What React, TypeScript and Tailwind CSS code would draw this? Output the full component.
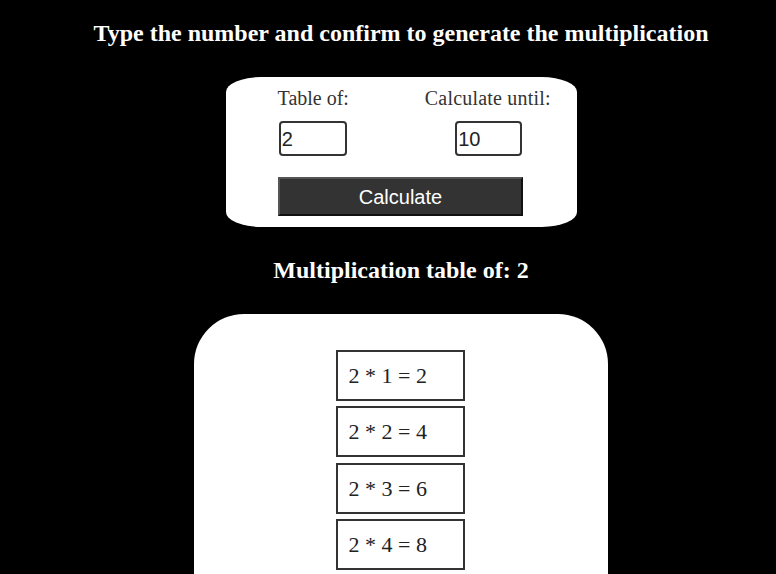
import React from "react";

export default function App() {
  const rows = [1, 2, 3, 4];
  return (
    <div className="h-[574px] bg-black pl-[26px] overflow-hidden" style={{ fontFamily: '"Liberation Serif", "Times New Roman", serif' }}>
      <div className="flex flex-col items-center">
        <h2 className="mt-[19px] text-[24px] leading-[28px] font-bold text-white">
          Type the number and confirm to generate the multiplication
        </h2>
        <div className="mt-[30px] w-[351px] h-[150px] bg-white rounded-[10%] flex flex-col items-center pt-[10px]">
          <div className="grid grid-cols-2 w-full">
            <div className="flex flex-col items-center">
              <span className="text-[20px] leading-[23px] text-[#333]">Table of:</span>
              <div className="mt-[11px] ml-[-1px] w-[68px] h-[35px] border-2 border-[#333] rounded-[4px] flex items-center pl-[1px] text-[20px] text-[#222]" style={{ fontFamily: '"Liberation Sans", Arial, sans-serif' }}>2</div>
            </div>
            <div className="flex flex-col items-center">
              <span className="ml-[-2px] text-[20px] leading-[23px] text-[#333] tracking-[0.2px]">Calculate until:</span>
              <div className="mt-[11px] w-[67px] h-[35px] border-2 border-[#333] rounded-[4px] flex items-center pl-[1px] text-[20px] text-[#222]" style={{ fontFamily: '"Liberation Sans", Arial, sans-serif' }}>10</div>
            </div>
          </div>
          <div className="mt-[21px] ml-[-1px] w-[245px] h-[39px] bg-[#333] border-2 border-t-[#555] border-l-[#555] border-b-[#111] border-r-[#111] flex items-center justify-center text-white text-[20px]" style={{ fontFamily: '"Liberation Sans", Arial, sans-serif' }}>
            Calculate
          </div>
        </div>
        <h2 className="mt-[29px] text-[24px] leading-[28px] font-bold text-white">Multiplication table of: 2</h2>
        <div className="mt-[30px] w-[414px] bg-white rounded-[50px] flex flex-col items-center pt-[36px] pb-[60px] gap-[5.4px]">
          {rows.map((i) => (
            <div key={i} className="ml-[-2px] w-[129px] h-[51px] border-2 border-[#333] flex items-center pl-[11px] text-[22px] text-[#222]">
              2 * {i} = {2 * i}
            </div>
          ))}
        </div>
      </div>
    </div>
  );
}
